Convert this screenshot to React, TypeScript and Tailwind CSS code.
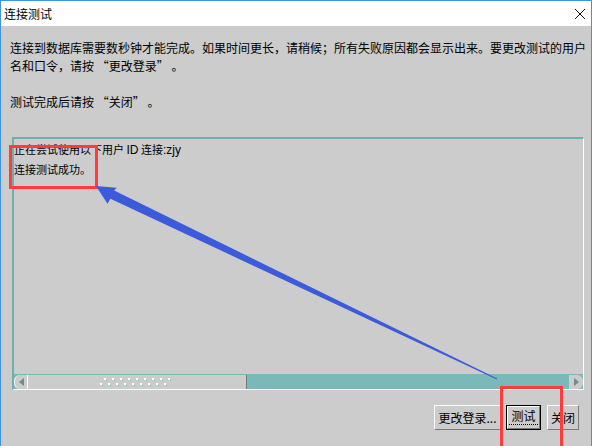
import React from "react";

const cjk = { fontFamily: '"Noto Sans CJK SC", "Liberation Sans", sans-serif' };

function Btn({ children, focused, w }: { children: React.ReactNode; focused?: boolean; w: string }) {
  return (
    <div className={`${w} h-[25px] ${focused ? "border border-black" : ""}`}>
      <div className="w-full h-full border-t border-l border-white border-r border-b border-r-[#7a7a7a] border-b-[#7a7a7a] flex items-center justify-center text-[12px] text-black leading-none">
        {focused ? (
          <span className="border-b border-dotted border-black pb-[2px] px-[2px]">{children}</span>
        ) : (
          children
        )}
      </div>
    </div>
  );
}

export default function App() {
  return (
    <div className="w-[592px] h-[446px] bg-[#cccccc] relative border-x border-t border-[#3d95e7] flex flex-col overflow-hidden" style={cjk}>
      <div className="h-[25px] bg-white flex items-center justify-between pl-[3px] pr-[5px] shrink-0">
        <span className="text-[12px] text-black leading-none">连接测试</span>
        <svg width="12" height="12" viewBox="0 0 12 12">
          <path d="M1 1 L11 11 M11 1 L1 11" stroke="#111" strokeWidth="1" />
        </svg>
      </div>
      <div className="flex-1 flex flex-col pt-[13px]">
        <div className="pl-[9px] text-[12px] leading-[18px] text-black">
          <div>连接到数据库需要数秒钟才能完成。如果时间更长，请稍候；所有失败原因都会显示出来。要更改测试的用户</div>
          <div>名和口令，请按 “更改登录” 。</div>
          <div>&nbsp;</div>
          <div>测试完成后请按 “关闭” 。</div>
        </div>
        <div className="ml-[11px] mt-[26px] w-[572px] h-[253px] border-t-2 border-l-2 border-t-[#6fb0af] border-l-[#6fb0af] border-r border-b border-r-white border-b-white flex flex-col">
          <div className="flex-1 pl-[0px] pt-[1px] text-[11px] leading-[19px] text-black">
            <div>正在尝试使用以下用户 <span className="text-[12px]" style={{ fontFamily: '"Liberation Sans", sans-serif' }}>ID</span> 连接<span className="text-[12px]" style={{ fontFamily: '"Liberation Sans", sans-serif' }}>:zjy</span></div>
            <div>连接测试成功。</div>
          </div>
          <div className="h-[15px] flex border-t border-[#7bb9b8] bg-[#7bb9b8] shrink-0">
            <div className="w-[13px] h-full bg-[#cccccc] rounded-l-[6px] border-l border-white flex items-center justify-center">
              <svg width="5" height="8" viewBox="0 0 5 8"><path d="M5 0 L0 4 L5 8 Z" fill="#6e8a8a" /></svg>
            </div>
            <div className="w-[220px] h-full bg-[#cccccc] border-l border-white border-r border-r-[#7a7a7a] relative">
              <svg className="absolute left-[72px] top-[2px]" width="76" height="10" viewBox="0 0 76 10">
                {Array.from({ length: 9 }).map((_, i) => (
                  <g key={i}>
                    <rect x={4 + i * 8} y={1} width="2" height="2" fill="#ffffff" />
                    <rect x={6 + i * 8} y={3} width="1" height="1" fill="#7bb9b8" />
                    <rect x={i * 8 + 0} y={6} width="2" height="2" fill="#ffffff" />
                    <rect x={i * 8 + 2} y={8} width="1" height="1" fill="#7bb9b8" />
                  </g>
                ))}
              </svg>
            </div>
            <div className="flex-1 h-full" />
            <div className="w-[14px] h-full bg-[#cccccc] rounded-r-[6px] flex items-center justify-center">
              <svg width="5" height="8" viewBox="0 0 5 8"><path d="M0 0 L5 4 L0 8 Z" fill="#6e8a8a" /></svg>
            </div>
          </div>
        </div>
        <div className="flex justify-end items-start mt-[15px] pr-[12px] gap-[5px]">
          <Btn w="w-[67px]">更改登录...</Btn>
          <Btn w="w-[35px]" focused>测试</Btn>
          <div className="ml-[1px]"><Btn w="w-[32px]">关闭</Btn></div>
        </div>
      </div>

      {/* Red annotation boxes */}
      <div className="absolute left-[8px] top-[144px] w-[89px] h-[44px] border-[3px] border-[#ff3b3b]" />
      <div className="absolute left-[499px] top-[385px] w-[63px] h-[70px] border-[3px] border-[#ff3b3b]" />

      {/* Blue arrow */}
      <svg className="absolute left-[-1px] top-[-1px]" width="592" height="446" viewBox="0 0 592 446">
        <polygon
          points="96,186 116.6,187.7 114.2,190.6 497.2,378.5 496.8,379.5 110.4,198.8 107.5,203.7"
          fill="#3b5bdb"
        />
      </svg>
    </div>
  );
}
